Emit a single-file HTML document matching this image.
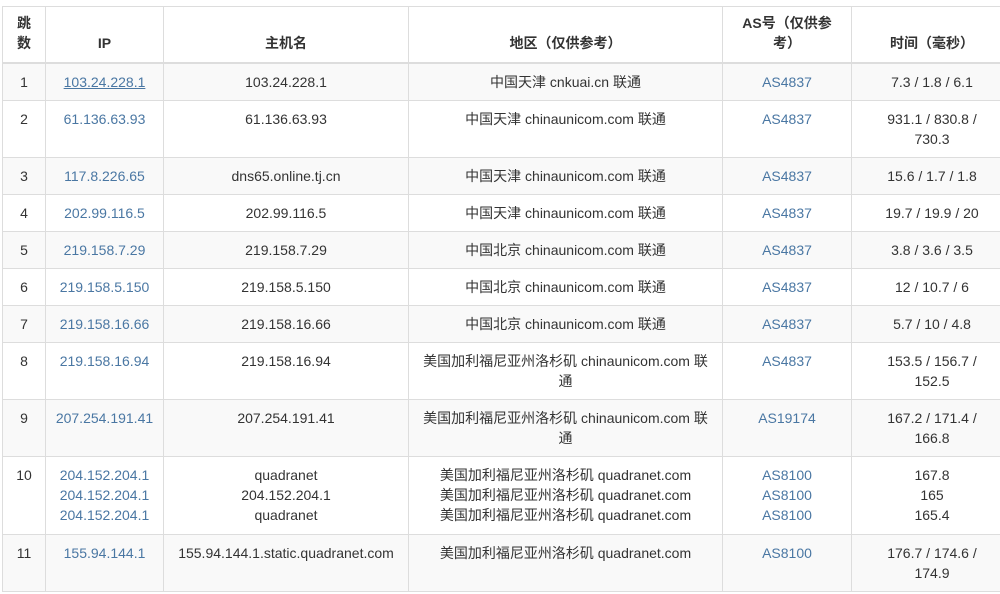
<!DOCTYPE html><html><head><meta charset="utf-8"><style>
body{margin:0;background:#fff;font-family:"Liberation Sans","Noto Sans CJK SC",sans-serif;font-size:14px;color:#333;}
table{position:absolute;left:2px;top:6px;border-collapse:collapse;table-layout:fixed;width:1010px;}
td,th{border:1px solid #ddd;text-align:center;vertical-align:top;padding:8px 6px 8px;line-height:20px;overflow:hidden;}
th{vertical-align:bottom;font-weight:bold;border-bottom:2px solid #ddd;padding:6px 6px 9px}
tbody tr:nth-child(odd){background:#f9f9f9}
a{color:#4a77a3;text-decoration:none}
u{text-decoration:underline}
</style></head><body>
<table>
<colgroup><col style="width:43px"><col style="width:118px"><col style="width:245px"><col style="width:314px"><col style="width:129px"><col style="width:161px"></colgroup>
<thead><tr style="height:56px"><th>跳<br>数</th><th>IP</th><th>主机名</th><th>地区（仅供参考）</th><th>AS号（仅供参<br>考）</th><th>时间（毫秒）</th></tr></thead>
<tbody>
<tr style="height:37px"><td>1</td><td><a><u>103.24.228.1</u></a></td><td>103.24.228.1</td><td>中国天津 cnkuai.cn 联通</td><td><a>AS4837</a></td><td>7.3 / 1.8 / 6.1</td></tr>
<tr style="height:57px"><td>2</td><td><a>61.136.63.93</a></td><td>61.136.63.93</td><td>中国天津 chinaunicom.com 联通</td><td><a>AS4837</a></td><td>931.1 / 830.8 /<br>730.3</td></tr>
<tr style="height:37px"><td>3</td><td><a>117.8.226.65</a></td><td>dns65.online.tj.cn</td><td>中国天津 chinaunicom.com 联通</td><td><a>AS4837</a></td><td>15.6 / 1.7 / 1.8</td></tr>
<tr style="height:37px"><td>4</td><td><a>202.99.116.5</a></td><td>202.99.116.5</td><td>中国天津 chinaunicom.com 联通</td><td><a>AS4837</a></td><td>19.7 / 19.9 / 20</td></tr>
<tr style="height:37px"><td>5</td><td><a>219.158.7.29</a></td><td>219.158.7.29</td><td>中国北京 chinaunicom.com 联通</td><td><a>AS4837</a></td><td>3.8 / 3.6 / 3.5</td></tr>
<tr style="height:37px"><td>6</td><td><a>219.158.5.150</a></td><td>219.158.5.150</td><td>中国北京 chinaunicom.com 联通</td><td><a>AS4837</a></td><td>12 / 10.7 / 6</td></tr>
<tr style="height:37px"><td>7</td><td><a>219.158.16.66</a></td><td>219.158.16.66</td><td>中国北京 chinaunicom.com 联通</td><td><a>AS4837</a></td><td>5.7 / 10 / 4.8</td></tr>
<tr style="height:57px"><td>8</td><td><a>219.158.16.94</a></td><td>219.158.16.94</td><td>美国加利福尼亚州洛杉矶 chinaunicom.com 联<br>通</td><td><a>AS4837</a></td><td>153.5 / 156.7 /<br>152.5</td></tr>
<tr style="height:57px"><td>9</td><td><a>207.254.191.41</a></td><td>207.254.191.41</td><td>美国加利福尼亚州洛杉矶 chinaunicom.com 联<br>通</td><td><a>AS19174</a></td><td>167.2 / 171.4 /<br>166.8</td></tr>
<tr style="height:78px"><td>10</td><td><a>204.152.204.1<br>204.152.204.1<br>204.152.204.1</a></td><td>quadranet<br>204.152.204.1<br>quadranet</td><td>美国加利福尼亚州洛杉矶 quadranet.com<br>美国加利福尼亚州洛杉矶 quadranet.com<br>美国加利福尼亚州洛杉矶 quadranet.com</td><td><a>AS8100<br>AS8100<br>AS8100</a></td><td>167.8<br>165<br>165.4</td></tr>
<tr style="height:57px"><td>11</td><td><a>155.94.144.1</a></td><td>155.94.144.1.static.quadranet.com</td><td>美国加利福尼亚州洛杉矶 quadranet.com</td><td><a>AS8100</a></td><td>176.7 / 174.6 /<br>174.9</td></tr>
</tbody></table>
</body></html>
